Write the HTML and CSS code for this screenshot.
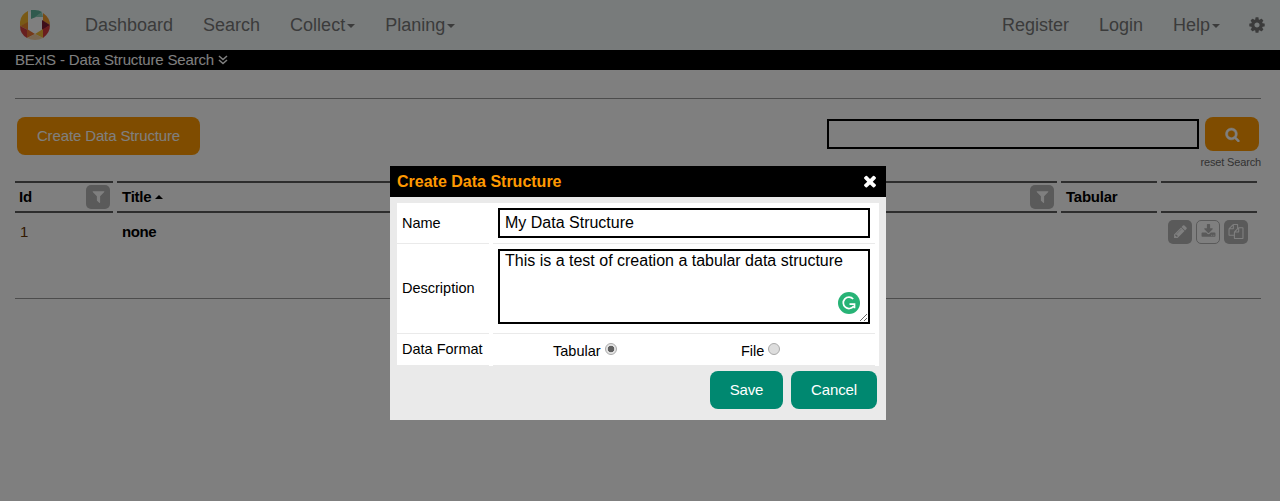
FILE: index.html
```html
<!DOCTYPE html>
<html lang="en">
<head>
<meta charset="utf-8">
<title>BExIS - Data Structure Search</title>
<link rel="stylesheet" href="styles.css">
</head>
<body>
<svg class="defs" width="0" height="0">
  <symbol id="filter" viewBox="0 0 1792 1792"><path d="M1595 295q17 41-14 70l-493 493v742q0 42-39 59-13 5-25 5-27 0-45-19l-256-256q-19-19-19-45v-486l-493-493q-31-29-14-70 17-39 59-39h1280q42 0 59 39z"/></symbol>
  <symbol id="cog" viewBox="0 0 1792 1792"><path d="M1152 896q0-106-75-181t-181-75-181 75-75 181 75 181 181 75 181-75 75-181zm512-109v222q0 12-8 23t-20 13l-185 28q-19 54-39 91 35 50 107 138 10 12 10 25t-9 23q-27 37-99 108t-94 71q-12 0-26-9l-138-108q-44 23-91 38-16 136-29 186-7 28-36 28h-222q-14 0-24.500-8.500t-11.500-21.500l-28-184q-49-16-90-37l-141 107q-10 9-25 9-14 0-25-11-126-114-165-168-7-10-7-23 0-12 8-23 15-21 51-66.500t54-70.500q-27-50-41-99l-183-27q-13-2-21-12.500t-8-23.500v-222q0-12 8-23t19-13l186-28q14-46 39-92-40-57-107-138-10-12-10-24 0-10 9-23 26-36 98.500-107.500t94.500-71.500q13 0 26 10l138 107q44-23 91-38 16-136 29-186 7-28 36-28h222q14 0 24.500 8.500t11.500 21.500l28 184q49 16 90 37l142-107q9-9 24-9 13 0 25 10 129 119 165 170 7 8 7 22 0 12-8 23-15 21-51 66.500t-54 70.500q26 50 41 98l183 28q13 2 21 12.500t8 23.500z"/></symbol>
  <symbol id="search" viewBox="0 0 1792 1792"><path d="M1216 832q0-185-131.500-316.500t-316.500-131.500-316.500 131.500-131.500 316.500 131.500 316.500 316.500 131.500 316.500-131.500 131.500-316.500zm512 832q0 52-38 90t-90 38q-54 0-90-38l-343-342q-179 124-399 124-143 0-273.500-55.500t-225-150-150-225-55.500-273.500 55.500-273.500 150-225 225-150 273.500-55.500 273.500 55.500 225 150 150 225 55.500 273.500q0 220-124 399l343 343q37 37 37 90z"/></symbol>
  <symbol id="times" viewBox="0 0 1792 1792"><path d="M1490 1322q0 40-28 68l-136 136q-28 28-68 28t-68-28l-294-294-294 294q-28 28-68 28t-68-28l-136-136q-28-28-28-68t28-68l294-294-294-294q-28-28-28-68t28-68l136-136q28-28 68-28t68 28l294 294 294-294q28-28 68-28t68 28l136 136q28 28 28 68t-28 68l-294 294 294 294q28 28 28 68z"/></symbol>
  <symbol id="pencil" viewBox="0 0 1792 1792"><path d="M491 1536l91-91-235-235-91 91v107h128v128h107zm523-928q0-22-22-22-10 0-17 7l-542 542q-7 7-7 17 0 22 22 22 10 0 17-7l542-542q7-7 7-17zm-54-192l416 416-832 832h-416v-416zm683 96q0 53-37 90l-166 166-416-416 166-165q36-38 90-38 53 0 91 38l235 234q37 39 37 91z"/></symbol>
  <symbol id="download" viewBox="0 0 1792 1792"><path d="M1344 1344q0-26-19-45t-45-19-45 19-19 45 19 45 45 19 45-19 19-45zm256 0q0-26-19-45t-45-19-45 19-19 45 19 45 45 19 45-19 19-45zm128-224v320q0 40-28 68t-68 28h-1472q-40 0-68-28t-28-68v-320q0-40 28-68t68-28h465l135 136q58 56 136 56t136-56l136-136h464q40 0 68 28t28 68zm-325-569q17 41-14 70l-448 448q-18 19-45 19t-45-19l-448-448q-31-29-14-70 17-39 59-39h256v-448q0-26 19-45t45-19h256q26 0 45 19t19 45v448h256q42 0 59 39z"/></symbol>
  <symbol id="copy" viewBox="0 0 1792 1792"><path d="M1696 384q40 0 68 28t28 68v1216q0 40-28 68t-68 28h-960q-40 0-68-28t-28-68v-288h-544q-40 0-68-28t-28-68v-672q0-40 20-88t48-76l408-408q28-28 76-48t88-20h416q40 0 68 28t28 68v328q68-40 128-40h416zm-544 213l-299 299h299v-299zm-640-384l-299 299h299v-299zm196 647l316-316v-416h-384v416q0 40-28 68t-68 28h-416v640h512v-256q0-40 20-88t48-76zm956 804v-1152h-384v416q0 40-28 68t-68 28h-416v640h896z"/></symbol>
</svg>

<nav class="navbar">
  <svg class="logo" viewBox="0 0 30 30">
    <path fill="#fff" d="M8 2h3v5l12-1v14l-8 5-7-5z"/>
    <path fill="#62b59c" d="M11 0h4q4 0 7 2l-6 5-5 2z"/>
    <path fill="#8fd0bb" d="M22 2l1 5H15z"/>
    <path fill="#f3b52d" d="M8 1v12L0 16q-1-11 8-15z"/>
    <path fill="#e8872a" d="M0 16l8-4v8z"/>
    <path fill="#f09a2c" d="M23 3q7 5 7 12l-7-4z"/>
    <path fill="#7d1d35" d="M22 10l8 5-8 6z"/>
    <path fill="#d53a3c" d="M30 15q0 8-7 13V19z"/>
    <path fill="#cf4140" d="M0 16l8 4-1 8q-7-4-7-12z"/>
    <path fill="#ea7434" d="M7 19l8 5-8 4z"/>
    <path fill="#f1bb35" d="M23 19v9l-8-4z"/>
    <path fill="#f1cda0" d="M7 28l8-4 8 4q-8 4-16 0z"/>
  </svg>
  <a class="nav-link dash">Dashboard</a>
  <a class="nav-link">Search</a>
  <a class="nav-link">Collect<i class="caret"></i></a>
  <a class="nav-link">Planing<i class="caret"></i></a>
  <span class="spacer"></span>
  <a class="nav-link">Register</a>
  <a class="nav-link">Login</a>
  <a class="nav-link">Help<i class="caret"></i></a>
  <svg class="cog"><use href="#cog"/></svg>
</nav>
<div class="crumb"><span>BExIS - Data Structure Search</span>
  <svg class="chevrons" viewBox="0 0 10 10"><path d="M1 1l4 3.500L9 1M1 5l4 3.500L9 5"/></svg>
</div>

<main class="content">
  <div class="toolbar">
    <button class="btn orange create">Create Data Structure</button>
    <div class="search">
      <div class="search-row">
        <input class="field search-field" type="text">
        <button class="btn orange go"><svg class="i15"><use href="#search"/></svg></button>
      </div>
      <a class="reset">reset Search</a>
    </div>
  </div>
  <div class="grid head">
    <div class="th first">Id<span class="tool"><svg><use href="#filter"/></svg></span></div>
    <div class="th">Title<i class="caret up"></i><span class="tool"><svg><use href="#filter"/></svg></span></div>
    <div class="th">Tabular</div>
    <div class="th"></div>
  </div>
  <div class="grid row">
    <div class="td id">1</div>
    <div class="td name">none</div>
    <div class="td"></div>
    <div class="td tools">
      <span class="tool"><svg><use href="#pencil"/></svg></span>
      <span class="tool light"><svg><use href="#download"/></svg></span>
      <span class="tool"><svg class="wide"><use href="#copy"/></svg></span>
    </div>
  </div>
</main>

<div class="overlay">
  <section class="modal">
    <header class="modal-head"><h2>Create Data Structure</h2><svg class="close"><use href="#times"/></svg></header>
    <div class="form">
      <div class="label name-cell">Name</div>
      <div class="value name-cell"><input class="field" type="text" value="My Data Structure"></div>
      <div class="label desc-label">Description</div>
      <div class="value desc-cell">
        <textarea class="field area">This is a test of creation a tabular data structure</textarea>
        <svg class="badge" viewBox="0 0 22 22"><circle cx="11" cy="11" r="11" fill="#27b376"/><path d="M15.200 7A5.700 5.700 0 1 0 15.600 14.200M11.500 12.200h5v4" fill="none" stroke="#fff" stroke-width="1.700"/></svg>
      </div>
      <div class="label fmt-cell">Data Format</div>
      <div class="value fmt-cell choices">
        <label class="choice">Tabular<input class="radio" type="radio" name="format" checked></label>
        <label class="choice">File<input class="radio" type="radio" name="format"></label>
      </div>
    </div>
    <footer class="actions"><button class="btn green save">Save</button><button class="btn green cancel">Cancel</button></footer>
  </section>
</div>
</body>
</html>
```
FILE: styles.css
```css
* { box-sizing: border-box; }
body { margin: 0; height: 501px; overflow: hidden; background: #fff; font: 15px/20px "Liberation Sans", Arial, sans-serif; color: #000; }
svg { display: block; fill: currentColor; flex: none; }
.defs { position: absolute; }

.navbar { display: flex; align-items: center; height: 50px; padding: 0 14px 0 20px; background: #f0f7f7; color: #777; font-size: 18px; }
.logo { width: 30px; height: 30px; margin-top: -1px; }
.nav-link { display: flex; align-items: center; margin-right: 30px; }
.dash { margin-left: 35px; }
.spacer { flex: 1; }
.caret { width: 0; height: 0; margin-left: 2px; margin-top: 2px; border: 4px solid transparent; border-top-color: currentColor; border-bottom: 0; }
.caret.up { margin: 0 0 0 4px; border-top: 0; border-bottom: 4px solid currentColor; }
.cog { width: 18px; height: 18px; margin-left: -2px; }

.crumb { display: flex; align-items: center; gap: 4px; height: 20px; padding-left: 15px; background: #000; color: #fff; letter-spacing: -0.15px; }
.chevrons { width: 10px; height: 10px; fill: none; stroke: currentColor; stroke-width: 1.6; }

.content { width: 1246px; height: 201px; margin: 28px 0 0 15px; border-top: 1px solid #999; border-bottom: 1px solid #999; }
.toolbar { display: flex; justify-content: space-between; height: 82px; padding: 18px 0 0 2px; }
.btn { display: flex; align-items: center; justify-content: center; height: 38px; padding: 0 0 2px; border: 0; border-radius: 8px; color: #fff; font: 15px "Liberation Sans", Arial, sans-serif; letter-spacing: -0.13px; }
.orange { background: #f90; }
.green { background: #008870; }
.create { width: 183px; }
.search-row { display: flex; align-items: center; gap: 6px; padding-right: 2px; }
.field { display: block; width: 372px; height: 30px; padding: 0 5px; border: 2px solid #000; border-radius: 0; outline: 0; background: #fff; color: #000; font: 16px/20px "Liberation Sans", Arial, sans-serif; }
.go { width: 54px; height: 34px; padding: 0; }
.i15 { width: 15px; height: 15px; stroke: currentColor; stroke-width: 60; }
.reset { display: block; color: #666; font-size: 11px; line-height: 22px; letter-spacing: -0.15px; text-align: right; }

.grid { display: grid; grid-template-columns: 98px 940px 96px 96px; column-gap: 4px; }
.th { display: flex; align-items: center; height: 32px; padding: 0 3px 0 5px; border-top: 2px solid #5a5a5a; border-bottom: 2px solid #5a5a5a; font-weight: bold; letter-spacing: -0.25px; }
.first { padding-left: 4px; }
.tool { display: flex; justify-content: center; width: 24px; height: 24px; padding-top: 4px; border-radius: 5px; background: #b4b4b4; color: #fff; }
.tool svg { width: 15px; height: 15px; }
.tool .wide { width: 16px; height: 15px; }
.th .tool { margin-left: auto; }
.light { padding-top: 3px; border: 1px solid #b4b4b4; background: #fff; color: #b4b4b4; }
.td { display: flex; align-items: center; height: 38px; padding: 0 5px; }
.id { color: #630; }
.name { font-weight: bold; letter-spacing: -0.4px; }
.tools { gap: 4px; padding-left: 7px; }

.overlay { position: fixed; inset: 0; padding-top: 166px; background: rgba(0,0,0,.5); }
.modal { width: 496px; height: 254px; margin-left: 390px; background: #eaeaea; }
.modal-head { display: flex; align-items: center; justify-content: space-between; height: 31px; padding: 0 7px; background: #000; color: #f90; }
.modal-head h2 { margin: 0; font-size: 16px; }
.close { width: 18px; height: 18px; margin-top: -2px; color: #fff; }
.form { display: grid; grid-template-columns: 92px 382px; column-gap: 4px; width: 482px; margin: 6px 7px 0; background: #fff; }
.label, .value { display: flex; align-items: center; border-bottom: 1px solid #eaeaea; padding-left: 5px; }
.label { font-size: 14.5px; }
.value { position: relative; }
.name-cell { height: 41px; }
.desc-cell { height: 90px; padding-bottom: 4px; }
.desc-label { height: 90px; padding-bottom: 1px; }
.fmt-cell { height: 32px; padding-bottom: 2px; }
.area { height: 75px; resize: both; }
.badge { position: absolute; right: 15px; top: 48px; width: 22px; height: 22px; }
.choices { padding: 3px 0 0; }
.choice { display: flex; align-items: center; gap: 4px; width: 188px; padding-left: 60px; font-size: 14.5px; }
.radio { appearance: none; width: 12px; height: 12px; margin: -5px 0 0; border: 1px solid #aaa; border-radius: 50%; background: #ddd; }
.radio:checked { background: radial-gradient(circle, #606060 0 3px, #e4e4e4 3.6px); }
.actions { display: flex; justify-content: flex-end; gap: 8px; padding: 5px 9px 0; }
.save { width: 73px; }
.cancel { width: 86px; }
```
